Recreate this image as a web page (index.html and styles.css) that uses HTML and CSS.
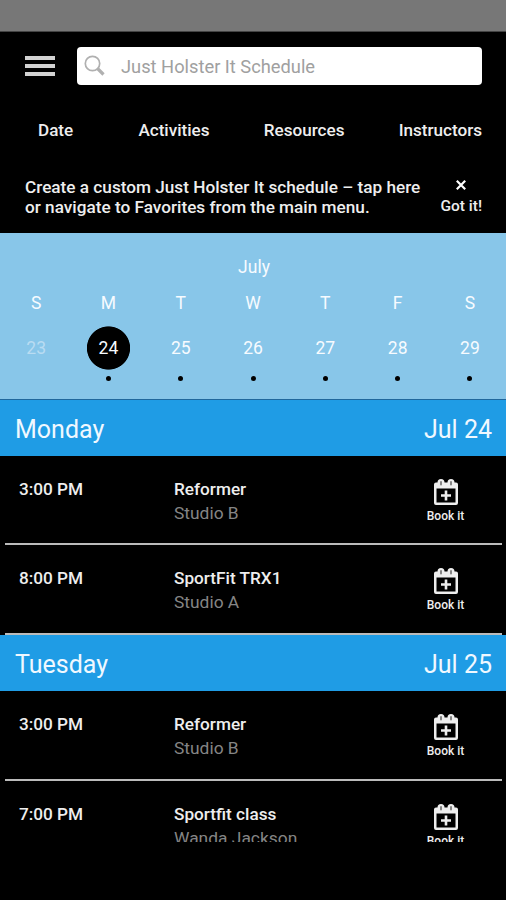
FILE: index.html
```html
<!DOCTYPE html>
<html lang="en">
<head>
    <meta charset="UTF-8">
    <title>Just Holster It Schedule</title>
    <link rel="stylesheet" href="styles.css">
</head>
<body>
    <svg width="0" height="0" class="icon-defs">
        <symbol id="calendar-plus" viewBox="0 0 26 28">
            <path fill="#eee" fill-rule="evenodd" d="M3 4.500H4.500A3.500 3.500 0 0 1 11.500 4.500H14.500A3.500 3.500 0 0 1 21.500 4.500H23Q25 4.500 25 6.500V25Q25 27 23 27H3Q1 27 1 25V6.500Q1 4.500 3 4.500ZM3.500 10.500V24.500H22.500V10.500Z"/>
            <path stroke="#858585" stroke-width="2" stroke-linecap="round" d="M8 4V6.500M18 4V6.500"/>
            <path stroke="#eee" stroke-width="2.600" d="M13 12.500V22.500M8 17.500H18"/>
        </symbol>
    </svg>
    <div class="status-bar"></div>
    <header>
        <div class="search-row">
            <button class="menu" aria-label="Menu"><span></span><span></span><span></span></button>
            <div class="search">
                <svg width="22" height="22" viewBox="0 0 22 22" fill="none" stroke="#b0b0b0">
                    <circle cx="8.500" cy="8.500" r="7.200" stroke-width="1.700"/>
                    <path d="M13.500 13.500L19.500 19.500" stroke-width="3.200"/>
                </svg>
                <span>Just Holster It Schedule</span>
            </div>
        </div>
        <nav>
            <a>Date</a>
            <a>Activities</a>
            <a>Resources</a>
            <a>Instructors</a>
        </nav>
        <div class="hint">
            <p>Create a custom Just Holster It schedule – tap here<br>or navigate to Favorites from the main menu.</p>
            <button class="got-it">
                <svg width="10" height="10" viewBox="0 0 10 10" stroke="#fff" stroke-width="2.200"><path d="M.8.8L9.200 9.200M9.200.8L.8 9.200"/></svg>
                <span>Got it!</span>
            </button>
        </div>
    </header>
    <section class="calendar">
        <div class="month">July</div>
        <div class="week">
            <span>S</span><span>M</span><span>T</span><span>W</span><span>T</span><span>F</span><span>S</span>
        </div>
        <div class="week dates">
            <span class="past">23</span>
            <span class="event selected">24</span>
            <span class="event">25</span>
            <span class="event">26</span>
            <span class="event">27</span>
            <span class="event">28</span>
            <span class="event">29</span>
        </div>
    </section>
    <main>
        <h2><span>Monday</span><span>Jul 24</span></h2>
        <div class="row">
            <div class="time">3:00 PM</div>
            <div class="info"><div class="name">Reformer</div><div class="place">Studio B</div></div>
            <div class="book"><svg width="26" height="28"><use href="#calendar-plus"/></svg><span>Book it</span></div>
        </div>
        <div class="row">
            <div class="time">8:00 PM</div>
            <div class="info"><div class="name">SportFit TRX1</div><div class="place">Studio A</div></div>
            <div class="book"><svg width="26" height="28"><use href="#calendar-plus"/></svg><span>Book it</span></div>
        </div>
        <h2><span>Tuesday</span><span>Jul 25</span></h2>
        <div class="row">
            <div class="time">3:00 PM</div>
            <div class="info"><div class="name">Reformer</div><div class="place">Studio B</div></div>
            <div class="book"><svg width="26" height="28"><use href="#calendar-plus"/></svg><span>Book it</span></div>
        </div>
        <div class="row">
            <div class="time">7:00 PM</div>
            <div class="info"><div class="name">Sportfit class</div><div class="place">Wanda Jackson</div></div>
            <div class="book"><svg width="26" height="28"><use href="#calendar-plus"/></svg><span>Book it</span></div>
        </div>
    </main>
</body>
</html>
```
FILE: styles.css
```css
* {
    box-sizing: border-box;
}

body {
    margin: 0;
    height: 900px;
    overflow: hidden;
    background: #000;
    color: #eee;
    font-family: Roboto, sans-serif;
    font-size: 17.5px;
}

button {
    border: 0;
    padding: 0;
    background: none;
    color: inherit;
    font: inherit;
}

.icon-defs {
    position: absolute;
}

.status-bar {
    height: 32px;
    background: #777;
    border-bottom: 1px solid #444;
}

header {
    height: 201px;
}

.search-row {
    display: flex;
    align-items: center;
    gap: 22px;
    padding: 15px 24px 0 25px;
}

.menu {
    display: flex;
    flex-direction: column;
    gap: 4px;
    width: 30px;
}

.menu span {
    height: 4px;
    background: #d2d2d2;
}

.search {
    display: flex;
    align-items: center;
    gap: 15px;
    flex: 1;
    height: 38px;
    padding: 1px 7px 0;
    border-radius: 4px;
    background: #fff;
    color: #a0a0a0;
    font-size: 18.3px;
}

.search svg {
    margin-top: -2px;
}

nav {
    display: flex;
    justify-content: space-between;
    padding: 35px 24px 0 38px;
    font-size: 17.1px;
    line-height: 21px;
    font-weight: 500;
}

nav a:first-child {
    margin-right: 11px;
}

.hint {
    display: flex;
    justify-content: space-between;
    padding: 36px 24px 0 25px;
    font-size: 17.2px;
    font-weight: 500;
    line-height: 20px;
}

.hint p {
    margin: 0;
    white-space: nowrap;
}

.got-it {
    display: flex;
    flex-direction: column;
    align-items: center;
    gap: 7px;
    padding-top: 3px;
    font-size: 15.5px;
    line-height: 18px;
}

.calendar {
    height: 167px;
    background: #88c6e9;
    color: #f7fbff;
    border-bottom: 1px solid #20679c;
}

.month {
    padding: 24px 0 0 2px;
    text-align: center;
    line-height: 20px;
}

.week {
    display: grid;
    grid-template-columns: repeat(7, 72.3px);
    padding-top: 16px;
    line-height: 20px;
    text-align: center;
}

.dates {
    padding-top: 13px;
    line-height: 44px;
}

.past {
    color: #b9dcf2;
}

.event {
    display: flex;
    flex-direction: column;
    align-items: center;
}

.event::after {
    content: "";
    width: 5px;
    height: 5px;
    margin-top: 6px;
    border-radius: 50%;
    background: #000;
}

.selected {
    background: radial-gradient(circle at 50% 22px, #000 21.2px, transparent 22px);
}

main {
    height: 442px;
    overflow: hidden;
}

h2 {
    display: flex;
    justify-content: space-between;
    align-items: center;
    height: 55.6px;
    margin: 0;
    padding: 3px 14px 0 15px;
    background: #1f9ce5;
    color: #f0f8ff;
    font-size: 25px;
    font-weight: 400;
}

.row {
    display: grid;
    grid-template-columns: 155px 1fr 60px;
    height: 89.9px;
    padding: 21px 31px 0 19px;
    background: linear-gradient(#bbb, #bbb) 5px bottom / 497px 2px no-repeat;
    font-size: 17.2px;
    font-weight: 500;
    line-height: 24px;
}

.place {
    color: #858585;
    font-size: 17.4px;
    font-weight: 400;
}

.book {
    display: flex;
    flex-direction: column;
    align-items: center;
    padding: 1px 0 0 1px;
    font-size: 12px;
    line-height: 14px;
}

.book span {
    margin-top: 3px;
}
```
